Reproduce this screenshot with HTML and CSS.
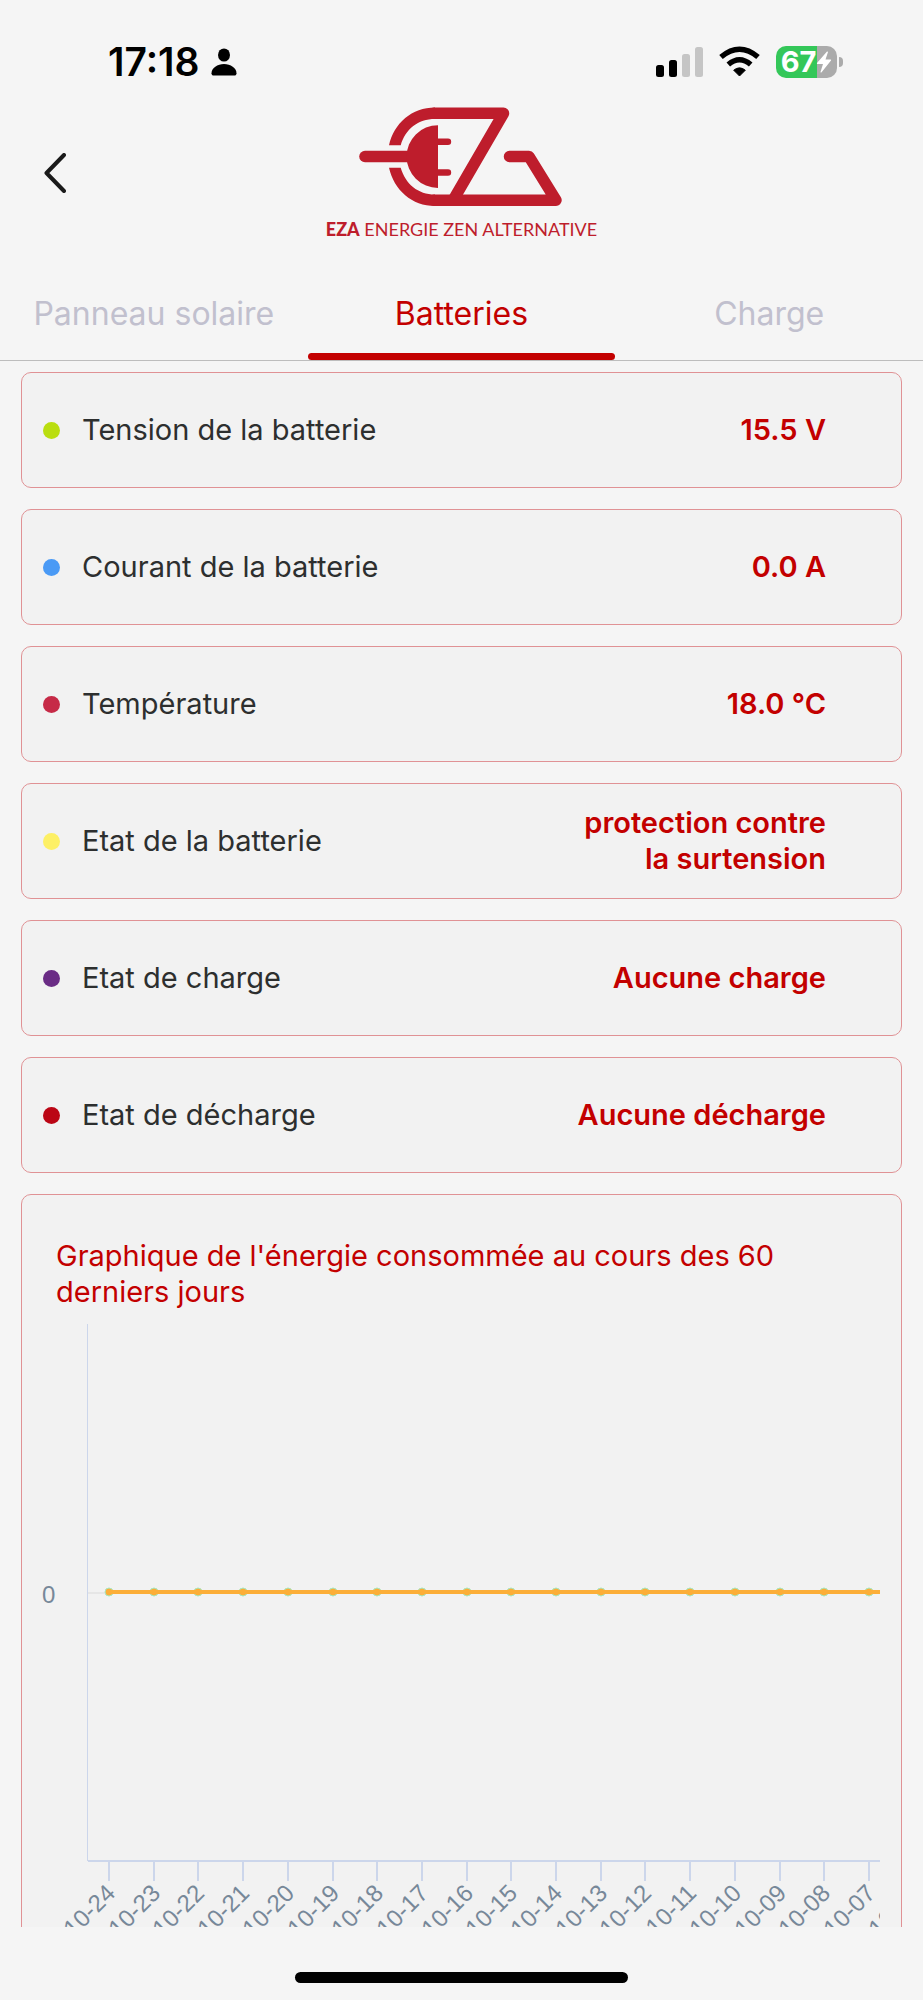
FILE: index.html
```html
<!DOCTYPE html>
<html lang="fr">
<head>
  <meta charset="UTF-8">
  <meta name="viewport" content="width=device-width, initial-scale=1">
  <title>Batteries</title>
  <link rel="stylesheet" href="styles.css">
</head>
<body>
  <div class="status-bar">
    <div class="status-left">
      <span class="clock">17:18</span>
      <svg class="icon-person" width="26" height="28" viewBox="0 0 26 28">
        <ellipse cx="13" cy="7" rx="6" ry="6.6"/>
        <path d="M13 16C19.500 16 25.500 20 25.500 25.200C25.500 26.600 24.600 27.500 23.300 27.500H2.700C1.400 27.500 .5 26.600 .5 25.200C.5 20 6.500 16 13 16Z"/>
      </svg>
    </div>
    <div class="status-right">
      <svg width="47" height="32" viewBox="0 0 47 32">
        <rect x="0" y="19" width="8" height="12" rx="2.500"/>
        <rect x="13" y="14" width="8" height="17" rx="2.500"/>
        <rect x="26" y="8" width="8" height="23" rx="2.500" fill="#c5c5c5"/>
        <rect x="39" y="1" width="8" height="30" rx="2.500" fill="#c5c5c5"/>
      </svg>
      <svg width="41" height="32" viewBox="0 0 41 32">
        <path d="M20.500 30L14.700 24.200Q20.500 19.500 26.300 24.200Z" stroke="#000" stroke-width="1" stroke-linejoin="round"/>
        <path d="M9.300 18.500Q20.500 9 31.700 18.500" fill="none" stroke="#000" stroke-width="5.500"/>
        <path d="M2 11Q20.500 -4.500 39 11" fill="none" stroke="#000" stroke-width="5.500"/>
      </svg>
      <div class="battery">
        <div class="battery-body">
          <span class="battery-level">67</span>
          <svg class="battery-bolt" width="16" height="22" viewBox="0 0 16 22">
            <path d="M11 .5L1 12Q.5 13 1.500 13H7L4.500 21Q4.800 22 5.800 21L15 9.500Q15.500 8.500 14.500 8.500H9.500L12 1Q11.800 .2 11 .5Z" fill="#fff"/>
          </svg>
        </div>
        <div class="battery-tip"></div>
      </div>
    </div>
  </div>

  <header class="header">
    <button class="back" type="button" aria-label="Retour">
      <svg width="22" height="40" viewBox="0 0 22 40">
        <path d="M20 2L2.500 20L20 38" fill="none" stroke="#1a1a1a" stroke-width="4" stroke-linecap="round" stroke-linejoin="round"/>
      </svg>
    </button>
    <div class="logo">
      <svg width="204" height="100" viewBox="0 0 204 100">
        <g fill="none" stroke="#be1d2c" stroke-width="11.500" stroke-linejoin="round" stroke-linecap="round">
          <path d="M75 6.300H144.500L94 93.300"/>
          <path d="M75 93.300H197L170 49.500H150.500"/>
          <path d="M6 49.500H55"/>
        </g>
        <g fill="#be1d2c">
          <path d="M30 38.300C35 16 53 .5 76 .5V12C59 12 46.500 22 41.700 38.300Z"/>
          <path d="M30 60.700C35 83 53 99 76 99V87.500C59 87.500 46.500 77 41.700 60.700Z"/>
          <path d="M79 18.200A31.300 31.300 0 0 0 79 81V68.700H89A3.200 3.200 0 0 0 89 62.300H79V38H89A3.200 3.200 0 0 0 89 31.600H79Z"/>
        </g>
      </svg>
      <div class="logo-text"><strong>EZA</strong> ENERGIE ZEN ALTERNATIVE</div>
    </div>
  </header>

  <nav class="tabs">
    <a href="#panneau">Panneau solaire</a>
    <a href="#batteries" class="active" aria-current="page">Batteries</a>
    <a href="#charge">Charge</a>
  </nav>

  <main class="content">
    <div class="card row">
      <span class="dot lime"></span>
      <span class="label">Tension de la batterie</span>
      <span class="value">15.5 V</span>
    </div>
    <div class="card row">
      <span class="dot blue"></span>
      <span class="label">Courant de la batterie</span>
      <span class="value">0.0 A</span>
    </div>
    <div class="card row">
      <span class="dot crimson"></span>
      <span class="label">Température</span>
      <span class="value">18.0 °C</span>
    </div>
    <div class="card row">
      <span class="dot yellow"></span>
      <span class="label">Etat de la batterie</span>
      <span class="value">protection contre la surtension</span>
    </div>
    <div class="card row">
      <span class="dot purple"></span>
      <span class="label">Etat de charge</span>
      <span class="value">Aucune charge</span>
    </div>
    <div class="card row">
      <span class="dot red"></span>
      <span class="label">Etat de décharge</span>
      <span class="value">Aucune décharge</span>
    </div>

    <section class="card chart-card">
      <h2>Graphique de l'énergie consommée au cours des 60 derniers jours</h2>
      <div class="chart">
        <svg id="graphique" width="100%" height="660"></svg>
      </div>
    </section>
  </main>

  <footer class="home-bar"><div class="home-indicator"></div></footer>

  <script>
    const jours = ["10-24", "10-23", "10-22", "10-21", "10-20", "10-19", "10-18", "10-17", "10-16", "10-15",
      "10-14", "10-13", "10-12", "10-11", "10-10", "10-09", "10-08", "10-07", "10-06"];
    const debut = 69;
    const pas = 44.7;
    const zeroY = 268;
    const axeY = 537;

    let svg = `
      <path class="axis-y" d="M47.500 0V${axeY}"/>
      <path class="grid" d="M48 ${zeroY + 1}H3000"/>
      <path class="axis" d="M48 ${axeY}H3000"/>
      <text class="tick-label" x="2" y="279">0</text>
    `;

    jours.forEach((jour, i) => {
      const x = Math.round(debut + i * pas);
      svg += `
        <path class="axis" d="M${x} ${axeY}V${axeY + 20}"/>
        <text class="tick-label" text-anchor="end" dy="8" transform="translate(${x + 2} ${axeY + 28}) rotate(-45)">${jour}</text>
        <circle class="point" cx="${x}" cy="${zeroY}" r="4"/>
      `;
    });

    svg += `<path class="serie" d="M${debut} ${zeroY}H3000"/>`;
    document.getElementById("graphique").innerHTML = svg;
  </script>
</body>
</html>
```
FILE: styles.css
```css
* {
  box-sizing: border-box;
}

body {
  font-family: Inter, "Liberation Sans", sans-serif;
  margin: 0;
  height: 100vh;
  display: flex;
  flex-direction: column;
  background-color: #f5f5f5;
  color: #2d2f2f;
}

svg {
  display: block;
}

.status-bar {
  display: flex;
  justify-content: space-between;
  align-items: center;
  height: 96px;
  padding: 28px 80px 0 108px;
  color: #000;
}

.status-left {
  display: flex;
  align-items: center;
  gap: 11px;
}

.clock {
  font-size: 39px;
  font-weight: 600;
  line-height: 40px;
}

.status-right {
  display: flex;
  align-items: center;
  gap: 16px;
}

.battery {
  display: flex;
  align-items: center;
  gap: 2px;
}

.battery-body {
  display: flex;
  align-items: center;
  justify-content: center;
  width: 61px;
  height: 32px;
  border-radius: 10px;
  background: linear-gradient(to right, #34c759 67%, #ababab 67%);
}

.battery-level {
  color: #fff;
  font-size: 29px;
  font-weight: 700;
  line-height: 32px;
}

.battery-tip {
  width: 4px;
  height: 10px;
  border-radius: 0 5px 5px 0;
  background-color: #ababab;
}

.header {
  display: grid;
  grid-template-columns: 1fr auto 1fr;
  align-items: start;
  height: 184px;
  padding: 11px 44px 0;
}

.back {
  justify-self: start;
  margin-top: 46px;
  padding: 0;
  border: 0;
  background: none;
  cursor: pointer;
}

.logo {
  display: flex;
  flex-direction: column;
  align-items: center;
  gap: 10px;
  color: #be1d2c;
}

.logo-text {
  font-family: Lato, sans-serif;
  font-size: 18px;
  font-weight: 400;
  line-height: 24px;
  white-space: nowrap;
}

.logo-text strong {
  font-weight: 900;
}

.tabs {
  display: grid;
  grid-template-columns: repeat(3, 1fr);
  height: 81px;
  border-bottom: 1px solid #bdbdbd;
}

.tabs a {
  display: flex;
  flex-direction: column;
  padding-top: 14px;
  color: #c1c0ce;
  font-size: 32px;
  line-height: 40px;
  text-align: center;
  text-decoration: none;
}

.tabs a.active {
  color: #c30000;
}

.tabs a.active::after {
  content: "";
  height: 7px;
  margin-top: auto;
  border-radius: 4px;
  background-color: #c30000;
}

.content {
  flex: 1;
  min-height: 0;
  overflow: hidden;
  display: flex;
  flex-direction: column;
  gap: 21px;
  padding: 11px 21px 0;
}

.card {
  flex-shrink: 0;
  border: 1px solid #e09295;
  border-radius: 10px;
  background-color: #f2f2f2;
}

.row {
  display: flex;
  align-items: center;
  min-height: 116px;
  padding: 0 75px 0 21px;
  font-size: 29px;
  line-height: 36px;
}

.dot {
  width: 17px;
  height: 17px;
  margin-right: 22px;
  border-radius: 50%;
}

.lime { background-color: #bade10; }
.blue { background-color: #4a9af5; }
.crimson { background-color: #c62a47; }
.yellow { background-color: #fdf065; }
.purple { background-color: #6a2c85; }
.red { background-color: #bb0615; }

.value {
  width: 260px;
  margin-left: auto;
  color: #c30000;
  font-weight: 600;
  text-align: right;
}

.chart-card {
  padding: 43px 21px 0 18px;
}

.chart-card h2 {
  margin: 0 60px 14px 16px;
  color: #c30000;
  font-size: 29px;
  font-weight: 400;
  line-height: 36px;
}

.chart {
  overflow: hidden;
}

.axis,
.axis-y {
  fill: none;
  stroke: #ccd6eb;
  stroke-width: 2;
}

.axis-y {
  stroke-width: 1;
}

.grid {
  stroke: #e6e6e6;
  stroke-width: 2;
}

.tick-label {
  fill: #778899;
  font-family: "Liberation Sans", Arial, sans-serif;
  font-size: 24px;
}

.point {
  fill: #fbae3a;
  stroke: #a5e8c0;
  stroke-width: 1;
}

.serie {
  stroke: #fcae38;
  stroke-width: 4;
}

.home-bar {
  display: flex;
  justify-content: center;
  height: 73px;
  padding-top: 45px;
}

.home-indicator {
  width: 36%;
  height: 11px;
  border-radius: 6px;
  background-color: #000;
}
```
